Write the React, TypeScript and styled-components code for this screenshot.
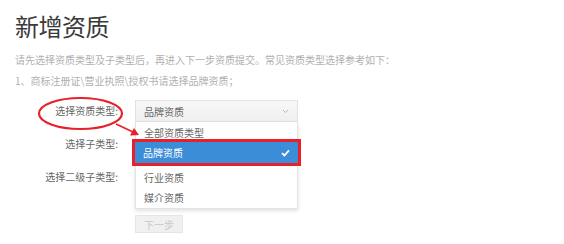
import React from "react";
import styled, { createGlobalStyle } from "styled-components";

const Global = createGlobalStyle`
  html, body { margin: 0; padding: 0; background: #fff; }
  body { font-family: "Microsoft YaHei", "Noto Sans CJK SC", "Noto Sans", sans-serif; }
`;

const Page = styled.div`
  position: relative;
  width: 564px;
  height: 244px;
  box-sizing: border-box;
  padding: 14px 0 0 15px;
  overflow: hidden;
`;

const Title = styled.h1`
  margin: 0;
  font-size: 24px;
  line-height: 24px;
  font-weight: 400;
  color: #3a3a3a;
  letter-spacing: -0.5px;
`;

const Desc = styled.p`
  margin: 11px 0 0;
  font-size: 10px;
  line-height: 21px;
  color: #b0b0b0;
`;

const Form = styled.div`
  margin-top: 9px;
  display: grid;
  grid-template-columns: 103px 163px;
  column-gap: 17px;
  row-gap: 11px;
  grid-auto-rows: 22px;
`;

const Label = styled.div`
  font-size: 10px;
  line-height: 22px;
  color: #666;
  text-align: right;
`;

const Field = styled.div`
  position: relative;
  height: 22px;
`;

const SelectBox = styled.div`
  box-sizing: border-box;
  height: 22px;
  border: 1px solid #e2e2e2;
  background: linear-gradient(#f8f8f8, #efefef);
  display: flex;
  align-items: center;
  justify-content: space-between;
  padding: 0 8px 0 8px;
  font-size: 10px;
  color: #666;
`;

const Menu = styled.div`
  position: absolute;
  top: 22px;
  left: 0;
  width: 163px;
  box-sizing: border-box;
  background: #fff;
  border: 1px solid #e4e4e4;
  border-top: none;
  box-shadow: 0 2px 4px rgba(0, 0, 0, 0.12);
  padding-bottom: 1px;
  z-index: 2;
`;

const Item = styled.div<{ $active?: boolean }>`
  height: ${(p) => (p.$active ? "21px" : "20px")};
  margin-bottom: ${(p) => (p.$active ? "4px" : "0")};
  display: flex;
  align-items: center;
  justify-content: space-between;
  padding: 0 8px;
  font-size: 10px;
  color: ${(p) => (p.$active ? "#fff" : "#666")};
  background: ${(p) => (p.$active ? "#3b8dd8" : "transparent")};
  outline: ${(p) => (p.$active ? "3px solid #e8202a" : "none")};
  outline-offset: 0;
  margin-left: ${(p) => (p.$active ? "-1px" : "0")};
  margin-right: ${(p) => (p.$active ? "-1px" : "0")};
`;

const Button = styled.button`
  grid-column: 2;
  justify-self: start;
  margin-top: 16px;
  width: 48px;
  height: 18px;
  border: 1px solid #e6e6e6;
  background: #f0f0f0;
  color: #c8c8c8;
  font-family: inherit;
  font-size: 10px;
  padding: 0;
`;

const Overlay = styled.svg`
  position: absolute;
  left: 0;
  top: 0;
  pointer-events: none;
  z-index: 3;
`;

const Chevron = () => (
  <svg width="7" height="5" viewBox="0 0 7 5">
    <path d="M1 1 L3.5 3.5 L6 1" fill="none" stroke="#bbb" strokeWidth="1" />
  </svg>
);

const Check = () => (
  <svg width="9" height="8" viewBox="0 0 9 8">
    <path d="M1 4.2 L3.4 6.5 L8 1.3" fill="none" stroke="#fff" strokeWidth="1.8" />
  </svg>
);

export default function App() {
  return (
    <>
      <Global />
      <Page>
        <Title>新增资质</Title>
        <Desc>
          请先选择资质类型及子类型后，再进入下一步资质提交。常见资质类型选择参考如下：
          <br />
          1、商标注册证\营业执照\授权书请选择品牌资质；
        </Desc>
        <Form>
          <Label>选择资质类型:</Label>
          <Field>
            <SelectBox>
              <span>品牌资质</span>
              <Chevron />
            </SelectBox>
            <Menu>
              <Item>全部资质类型</Item>
              <Item $active>
                <span>品牌资质</span>
                <Check />
              </Item>
              <Item>行业资质</Item>
              <Item>媒介资质</Item>
            </Menu>
          </Field>
          <Label>选择子类型:</Label>
          <Field />
          <Label>选择二级子类型:</Label>
          <Field />
          <Button>下一步</Button>
        </Form>
        <Overlay width="564" height="244" viewBox="0 0 564 244">
          <ellipse cx="80.5" cy="113.5" rx="41.5" ry="15.5" fill="none" stroke="#e8202a" strokeWidth="2.2" />
          <line x1="116" y1="124" x2="133" y2="132" stroke="#e8202a" strokeWidth="1.6" />
          <polygon points="139,135 130,135.5 134,128" fill="#e8202a" />
        </Overlay>
      </Page>
    </>
  );
}
